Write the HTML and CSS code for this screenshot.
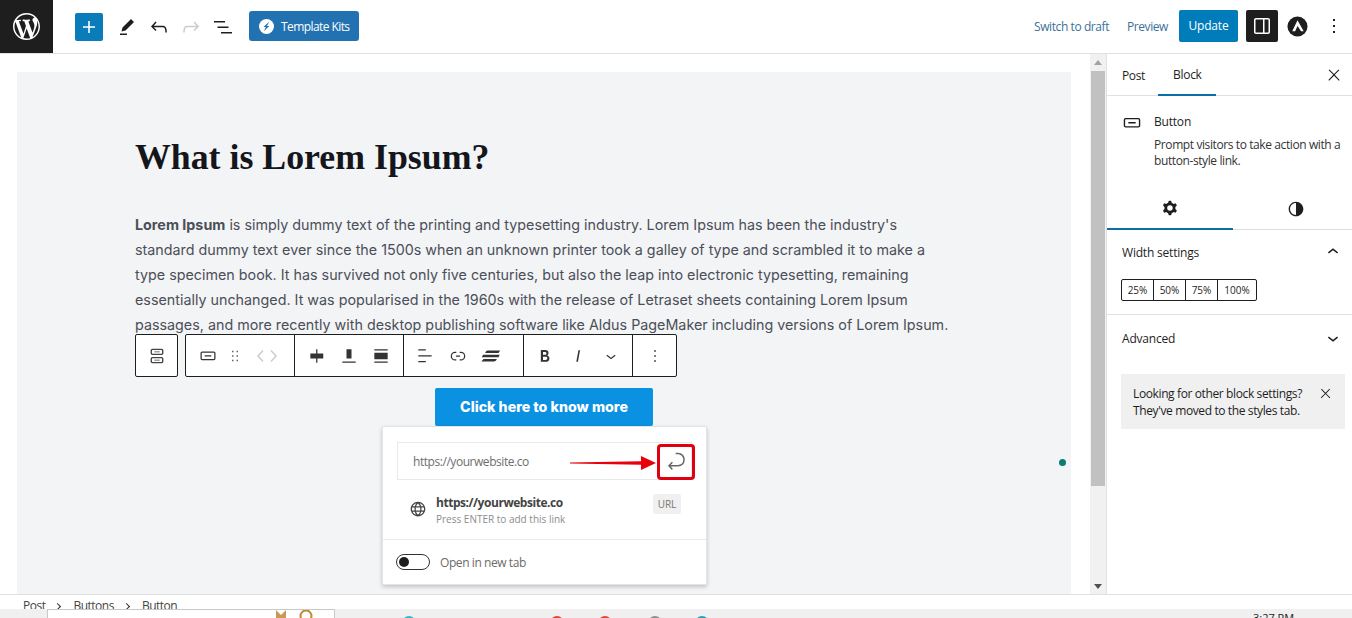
FILE: index.html
```html
<!DOCTYPE html>
<html lang="en">
<head>
<meta charset="UTF-8">
<title>Edit Post</title>
<link rel="stylesheet" href="styles.css">
</head>
<body>
<div class="topbar">
    <div class="wp-logo">
        <svg viewBox="0 0 20 20" width="36" height="36"><path fill="#fff" d="M20 10c0-5.51-4.49-10-10-10C4.48 0 0 4.49 0 10c0 5.52 4.48 10 10 10 5.51 0 10-4.48 10-10zM7.78 15.37L4.37 6.22c.55-.02 1.17-.08 1.17-.08.5-.06.44-1.13-.06-1.11 0 0-1.45.11-2.37.11-.18 0-.37 0-.58-.01C4.12 2.69 6.87 1.11 10 1.11c2.33 0 4.45.87 6.05 2.34-.68-.11-1.65.39-1.65 1.58 0 .74.45 1.36.9 2.1.35.61.55 1.36.55 2.46 0 1.49-1.4 5-1.4 5l-3.03-8.37c.54-.02.82-.17.82-.17.5-.05.44-1.25-.06-1.22 0 0-1.44.12-2.38.12-.87 0-2.33-.12-2.33-.12-.5-.03-.56 1.2-.06 1.22l.92.08 1.26 3.41zM17.41 10c.24-.64.74-1.87.43-4.25.7 1.29 1.05 2.71 1.05 4.25 0 3.29-1.73 6.24-4.4 7.78.97-2.59 1.94-5.2 2.92-7.78zM6.1 18.09C3.12 16.65 1.11 13.53 1.11 10c0-1.3.23-2.48.72-3.59C3.25 10.3 4.67 14.2 6.1 18.09zm4.03-6.63l2.58 6.98c-.86.29-1.76.45-2.71.45-.79 0-1.57-.11-2.29-.33.81-2.38 1.62-4.74 2.42-7.1z"/></svg>
    </div>
    <div class="tools">
        <div class="add-btn"><svg viewBox="0 0 24 24" width="24" height="24"><path fill="#fff" d="M18 11.2h-5.2V6h-1.6v5.2H6v1.6h5.2V18h1.6v-5.2H18z"/></svg></div>
        <div class="tool"><svg viewBox="0 0 24 24" width="24" height="24"><path d="m19 7-3-3-8.5 8.5-1 4 4-1L19 7Zm-7 11.5H5V20h7v-1.5Z"/></svg></div>
        <div class="tool"><svg viewBox="0 0 24 24" width="24" height="24"><path d="M18.3 11.7c-.6-.6-1.4-.9-2.3-.9H6.7l2.9-3.3-1.1-1-4.5 5L8.5 16l1-1-2.7-2.7H16c.5 0 .9.2 1.3.5 1 1 1 3.4 1 4.5v.3h1.5v-.2c0-1.5 0-4.3-1.5-5.7z"/></svg></div>
        <div class="tool off"><svg viewBox="0 0 24 24" width="24" height="24"><path d="M15.6 6.5l-1.1 1 2.9 3.3H8c-.9 0-1.7.3-2.3.9-1.4 1.5-1.4 4.2-1.4 5.6v.2h1.5v-.3c0-1.1 0-3.5 1-4.5.3-.3.7-.5 1.3-.5h9.2L14.5 15l1.1 1.1 4.6-4.6-4.6-5z"/></svg></div>
        <div class="tool"><svg viewBox="0 0 24 24" width="24" height="24"><path d="M3 6h11v1.5H3V6Zm3.5 5.5h11V13h-11v-1.5ZM21 17H10v1.5h11V17Z"/></svg></div>
        <div class="kits">
            <svg viewBox="0 0 20 20" width="15" height="15"><circle cx="10" cy="10" r="10" fill="#fff"/><path fill="#2271b1" d="M13.6 3.6 6 10.6h3.2l-2.8 5.8 7.4-7h-3.2z"/></svg>
            <span>Template Kits</span>
        </div>
    </div>
    <div class="actions">
        <a class="link draft">Switch to draft</a>
        <a class="link preview">Preview</a>
        <div class="update">Update</div>
        <div class="panel-btn"><svg viewBox="0 0 24 24" width="24" height="24"><path fill="#fff" d="M18 4H6c-1.1 0-2 .9-2 2v12c0 1.1.9 2 2 2h12c1.1 0 2-.9 2-2V6c0-1.1-.9-2-2-2zM6 5.5h7v13H6c-.3 0-.5-.2-.5-.5V6c0-.3.2-.5.5-.5zm12.5 12.5c0 .3-.2.5-.5.5h-3.5v-13H18c.3 0 .5.2.5.5v12z"/></svg></div>
        <div class="astra"><svg viewBox="0 0 22 22" width="21" height="21"><circle cx="11" cy="11" r="10.5" fill="#1e1e1e"/><path fill="#fff" d="M11 4.500 5.500 16h3l2.600-5.500 3.600 5.500h2.800z"/></svg></div>
        <div class="more"><svg viewBox="0 0 24 24" width="24" height="24"><path d="M13 19h-2v-2h2v2zm0-6h-2v-2h2v2zm0-6h-2V5h2v2z"/></svg></div>
    </div>
</div>

<div class="main">
    <div class="canvas">
        <div class="editor">
            <h1 class="title">What is Lorem Ipsum?</h1>
            <p class="para"><b>Lorem Ipsum</b> is simply dummy text of the printing and typesetting industry. Lorem Ipsum has been the industry's<br>standard dummy text ever since the 1500s when an unknown printer took a galley of type and scrambled it to make a<br>type specimen book. It has survived not only five centuries, but also the leap into electronic typesetting, remaining<br>essentially unchanged. It was popularised in the 1960s with the release of Letraset sheets containing Lorem Ipsum<br>passages, and more recently with desktop publishing software like Aldus PageMaker including versions of Lorem Ipsum.</p>

            <div class="block-toolbar">
                <div class="tb-group tb-parent">
                    <svg viewBox="0 0 24 24" width="24" height="24"><path d="M7 4h10a2 2 0 0 1 2 2v3a2 2 0 0 1-2 2H7a2 2 0 0 1-2-2V6a2 2 0 0 1 2-2Zm0 1.5a.5.5 0 0 0-.5.5v3a.5.5 0 0 0 .5.5h10a.5.5 0 0 0 .5-.5V6a.5.5 0 0 0-.5-.5H7ZM7 13h10a2 2 0 0 1 2 2v3a2 2 0 0 1-2 2H7a2 2 0 0 1-2-2v-3a2 2 0 0 1 2-2Zm0 1.5a.5.5 0 0 0-.5.5v3a.5.5 0 0 0 .5.5h10a.5.5 0 0 0 .5-.5v-3a.5.5 0 0 0-.5-.5H7ZM9 7h6v1H9V7Zm0 9h6v1H9v-1Z"/></svg>
                </div>
                <div class="tb-main">
                    <div class="tb-section s1">
                        <svg viewBox="0 0 24 24" width="24" height="24"><path d="M8 12.5h8V11H8v1.5Z M19 6.5H5a2 2 0 0 0-2 2V15a2 2 0 0 0 2 2h14a2 2 0 0 0 2-2V8.5a2 2 0 0 0-2-2ZM5 8h14a.5.5 0 0 1 .5.5V15a.5.5 0 0 1-.5.5H5a.5.5 0 0 1-.5-.5V8.5A.5.5 0 0 1 5 8Z"/></svg>
                        <svg class="drag" viewBox="0 0 24 24" width="18" height="18"><path d="M8 7h2V5H8v2zm0 6h2v-2H8v2zm0 6h2v-2H8v2zm6-14v2h2V5h-2zm0 8h2v-2h-2v2zm0 6h2v-2h-2v2z"/></svg>
                        <svg class="movers" viewBox="0 0 24 14" width="24" height="14"><path d="M8 1.5 3 7l5 5.5M16 1.5 21 7l-5 5.5" fill="none" stroke="#ccc" stroke-width="1.5"/></svg>
                    </div>
                    <div class="tb-section s2">
                        <svg viewBox="0 0 24 24" width="24" height="24"><path d="M12.5 15v5H11v-5H4V9h7V4h1.5v5h7v6h-7Z"/></svg>
                        <svg viewBox="0 0 24 24" width="24" height="24"><path d="M15 4H9v11h6V4zM4 18.5V20h16v-1.5H4z"/></svg>
                        <svg viewBox="0 0 24 24" width="24" height="24"><path d="M4 4h16v1.5H4zM4 18.5h16V20H4zM4 8h16v8H4z"/></svg>
                    </div>
                    <div class="tb-section s3">
                        <svg viewBox="0 0 24 24" width="24" height="24"><path d="M13 5.500H4V4h9v1.500Zm7 7H4V11h16v1.500Zm-7 7H4V18h9v1.500Z"/></svg>
                        <svg viewBox="0 0 24 24" width="24" height="24"><path d="M10 17.389H8.444A5.194 5.194 0 1 1 8.444 7H10v1.500H8.444a3.694 3.694 0 0 0 0 7.389H10v1.500ZM14 7h1.556a5.194 5.194 0 0 1 0 10.390H14v-1.500h1.556a3.694 3.694 0 0 0 0-7.390H14V7Zm-4.500 6h5v-1.500h-5V13Z"/></svg>
                        <svg viewBox="0 0 24 24" width="24" height="24"><path d="M8 5.500h15L21 8.500H5C5.500 6.800 6.500 5.500 8 5.500ZM2.500 10.500h20L21 13.500H1ZM3 15.500h16c-.5 1.800-1.800 3-3.500 3H.5Z"/></svg>
                    </div>
                    <div class="tb-section s4">
                        <svg viewBox="0 0 24 24" width="24" height="24"><path d="M14.700 11.300c1-.6 1.500-1.600 1.500-3 0-2.300-1.300-3.400-4-3.400H7v14h5.800c1.400 0 2.500-.3 3.300-1 .8-.7 1.200-1.700 1.200-2.900.1-1.900-.8-3.100-2.600-3.700zm-5.100-4h2.300c.6 0 1.100.1 1.400.4.3.3.5.7.5 1.200s-.2 1-.5 1.200c-.3.3-.8.4-1.400.4H9.600V7.300zm4.600 9c-.4.3-1 .4-1.700.4H9.600v-3.900h2.900c.7 0 1.300.2 1.700.5.4.3.6.8.6 1.500s-.2 1.200-.6 1.500z"/></svg>
                        <svg viewBox="0 0 24 24" width="24" height="24"><path d="M12.500 5L10 19h1.900l2.500-14z"/></svg>
                        <svg viewBox="0 0 24 24" width="24" height="24"><path d="M17.500 11.600L12 16l-5.500-4.400.9-1.200L12 14l4.500-3.600 1 1.200z"/></svg>
                    </div>
                    <div class="tb-section s5">
                        <svg viewBox="0 0 24 24" width="24" height="24"><path d="M13 19h-2v-2h2v2zm0-6h-2v-2h2v2zm0-6h-2V5h2v2z"/></svg>
                    </div>
                </div>
            </div>

            <div class="button-row">
                <div class="button-wrap">
                    <div class="cta">Click here to know more</div>
                    <div class="link-popover">
                        <div class="url-row">
                            <span class="url-input">https://yourwebsite.co</span>
                            <svg class="submit-icon" viewBox="0 0 24 24" width="24" height="24"><path d="M6.734 16.106l2.176-2.380-1.093-1.028-3.846 4.158 3.846 4.157 1.093-1.027-2.176-2.380h2.811c1.125 0 2.250.030 3.374 0 1.428-.001 3.362-.250 4.963-1.277 1.660-1.065 2.868-2.906 2.868-5.859 0-2.479-1.327-4.896-3.650-5.930-1.820-.813-3.044-.800-4.806-.788l-.567.002v1.500c.184 0 .368 0 .553-.002 1.820-.007 2.704-.014 4.210.657 1.854.827 2.760 2.657 2.760 4.561 0 2.472-.973 3.824-2.178 4.596-1.258.807-2.864 1.040-4.163 1.040h-.020c-1.115.030-2.229 0-3.344 0H6.734z"/></svg>
                            <div class="red-box"></div>
                            <svg class="red-arrow" viewBox="0 0 86 14" width="86" height="14"><path fill="#e8000b" d="M0 6.600 71 5.200V0l15 7-15 7V8.800L0 7.400z"/></svg>
                        </div>
                        <div class="suggestion">
                            <svg viewBox="0 0 24 24" width="20" height="20"><path d="M12 3.300c-4.800 0-8.800 3.900-8.800 8.800 0 4.800 3.900 8.800 8.800 8.800 4.800 0 8.800-3.900 8.800-8.800s-4-8.800-8.800-8.800zm6.500 5.500h-2.600C15.400 7.300 14.800 6 14 5c2 .6 3.600 2 4.500 3.800zm.7 3.200c0 .6-.1 1.200-.2 1.800h-2.900c.1-.6.1-1.200.1-1.800s-.1-1.200-.1-1.800H19c.2.6.2 1.200.2 1.800zM12 18.700c-1-.7-1.800-1.900-2.300-3.500h4.600c-.5 1.600-1.300 2.900-2.300 3.500zm-2.600-4.900c-.1-.6-.1-1.100-.1-1.800 0-.6.1-1.200.1-1.800h5.200c.1.600.1 1.100.1 1.800s-.1 1.200-.1 1.800H9.400zM4.800 12c0-.6.1-1.200.2-1.800h2.900c-.1.600-.1 1.200-.1 1.800 0 .6.1 1.200.1 1.800H5c-.2-.6-.2-1.200-.2-1.800zM12 5.300c1 .7 1.800 1.900 2.300 3.500H9.700c.5-1.600 1.300-2.900 2.300-3.500zM10 5c-.8 1-1.400 2.300-1.800 3.800H5.500C6.400 7 8 5.600 10 5zM5.500 15.300h2.600c.4 1.500 1 2.800 1.800 3.700-1.900-.6-3.500-2-4.400-3.700zM14 19c.8-1 1.400-2.200 1.800-3.700h2.600C17.600 17 16 18.400 14 19z"/></svg>
                            <div class="sug-text">
                                <strong>https://yourwebsite.co</strong>
                                <span>Press ENTER to add this link</span>
                            </div>
                            <span class="url-tag">URL</span>
                        </div>
                        <div class="new-tab">
                            <span class="toggle"><i></i></span>
                            <span>Open in new tab</span>
                        </div>
                    </div>
                </div>
            </div>
            <span class="dot"></span>
        </div>
    </div>
    <div class="scrollbar">
        <span class="arrow up"></span>
        <div class="thumb"></div>
        <span class="arrow down"></span>
    </div>
    <div class="sidebar">
        <div class="side-tabs">
            <span class="side-tab">Post</span>
            <span class="side-tab active">Block</span>
            <svg class="side-close" viewBox="0 0 24 24" width="20" height="20"><path d="M13 11.800l6.100-6.300-1-1-6.100 6.200-6.100-6.200-1 1 6.100 6.300-6.500 6.700 1 1 6.500-6.600 6.500 6.600 1-1z"/></svg>
        </div>
        <div class="block-card">
            <svg viewBox="0 0 24 24" width="22" height="22"><path d="M8 12.500h8V11H8v1.500Z M19 6.500H5a2 2 0 0 0-2 2V15a2 2 0 0 0 2 2h14a2 2 0 0 0 2-2V8.500a2 2 0 0 0-2-2ZM5 8h14a.5.5 0 0 1 .5.5V15a.5.5 0 0 1-.5.5H5a.5.5 0 0 1-.5-.5V8.500A.5.5 0 0 1 5 8Z"/></svg>
            <div class="card-text">
                <div class="card-title">Button</div>
                <div class="card-desc">Prompt visitors to take action with a button-style link.</div>
            </div>
        </div>
        <div class="style-tabs">
            <div class="style-tab active"><svg fill-rule="evenodd" viewBox="0 0 24 24" width="22" height="22"><path d="M10.289 4.836A1 1 0 0 1 11.275 4h1.306a1 1 0 0 1 .987.836l.244 1.466c.787.260 1.503.679 2.108 1.218l1.393-.522a1 1 0 0 1 1.216.437l.653 1.130a1 1 0 0 1-.230 1.273l-1.148.944a6.025 6.025 0 0 1 0 2.435l1.149.946a1 1 0 0 1 .230 1.272l-.653 1.130a1 1 0 0 1-1.216.437l-1.394-.522c-.605.540-1.320.958-2.108 1.218l-.244 1.466a1 1 0 0 1-.987.836h-1.306a1 1 0 0 1-.986-.836l-.244-1.466a5.995 5.995 0 0 1-2.108-1.218l-1.394.522a1 1 0 0 1-1.217-.436l-.653-1.131a1 1 0 0 1 .230-1.272l1.149-.946a6.026 6.026 0 0 1 0-2.435l-1.148-.944a1 1 0 0 1-.230-1.272l.653-1.131a1 1 0 0 1 1.217-.437l1.393.522a5.994 5.994 0 0 1 2.108-1.218l.244-1.466ZM14.929 12a3 3 0 1 1-6 0 3 3 0 0 1 6 0Z"/></svg></div>
            <div class="style-tab"><svg viewBox="0 0 24 24" width="22" height="22"><path d="M12 4c-4.400 0-8 3.600-8 8s3.600 8 8 8 8-3.600 8-8-3.600-8-8-8zm0 14.500c-3.600 0-6.500-2.900-6.500-6.500S8.400 5.500 12 5.500v13z"/></svg></div>
        </div>
        <div class="panel width-panel">
            <div class="panel-head">
                <span>Width settings</span>
                <svg viewBox="0 0 24 24" width="22" height="22"><path d="M6.500 12.400L12 8l5.500 4.400-.9 1.200L12 10l-4.500 3.600-1-1.200z"/></svg>
            </div>
            <div class="width-btns">
                <span>25%</span><span>50%</span><span>75%</span><span class="wide">100%</span>
            </div>
        </div>
        <div class="panel adv-panel">
            <div class="panel-head">
                <span>Advanced</span>
                <svg viewBox="0 0 24 24" width="22" height="22"><path d="M17.500 11.600L12 16l-5.500-4.400.9-1.200L12 14l4.500-3.600 1 1.200z"/></svg>
            </div>
        </div>
        <div class="notice">
            <span>Looking for other block settings? They've moved to the styles tab.</span>
            <svg viewBox="0 0 24 24" width="15" height="15"><path d="M13 11.800l6.100-6.300-1-1-6.100 6.200-6.100-6.200-1 1 6.100 6.300-6.500 6.700 1 1 6.500-6.600 6.500 6.600 1-1z"/></svg>
        </div>
    </div>
</div>

<div class="crumbs">
    <span>Post</span><i class="sep"></i><span>Buttons</span><i class="sep"></i><span>Button</span>
</div>

<div class="taskbar">
    <div class="task-window">
        <svg viewBox="0 0 44 9" width="44" height="9"><path d="M2 0l5 5 5-5v9H2z" fill="#c79a56"/><circle cx="32" cy="6" r="5.500" fill="none" stroke="#c08a2e" stroke-width="2"/></svg>
    </div>
    <i class="task-dot d1"></i>
    <i class="task-dot d2"></i>
    <i class="task-dot d3"></i>
    <i class="task-dot d4"></i>
    <i class="task-dot d5"></i>
    <span class="clock">3:27 PM</span>
</div>
</body>
</html>
```

FILE: styles.css
```css
*{margin: 0; padding: 0; box-sizing: border-box;}
html, body{
    width: 1352px;
    height: 618px;
    overflow: hidden;
}
body{
    display: flex;
    flex-direction: column;
    font-family: "Open Sans", "Noto Sans", sans-serif;
    font-size: 12px;
    color: #1e1e1e;
    background: #fff;
}
svg{
    display: block;
    fill: #1e1e1e;
    flex: none;
}

/* top bar */
.topbar{
    height: 54px;
    flex: none;
    display: flex;
    align-items: flex-start;
    border-bottom: 1px solid #e0e0e0;
}
.wp-logo{
    width: 53px;
    height: 53px;
    background: #1e1e1e;
    display: flex;
    align-items: center;
    justify-content: center;
}
.wp-logo svg{
    width: 27px;
    height: 27px;
}
.tools{
    display: flex;
    align-items: center;
    height: 53px;
    padding-left: 22px;
}
.add-btn{
    width: 28px;
    height: 28px;
    background: #0a7cba;
    border-radius: 2px;
    display: flex;
    align-items: center;
    justify-content: center;
    margin-right: 8px;
}
.tool{
    width: 32px;
    display: flex;
    justify-content: center;
}
.tool.off svg{
    fill: #ccc;
}
.kits{
    width: 110px;
    height: 30px;
    margin-left: 10px;
    margin-top: -1px;
    background: #2271b1;
    border-radius: 3px;
    color: #fff;
    display: flex;
    align-items: center;
    gap: 7px;
    padding-left: 10px;
    font-size: 12px;
    letter-spacing: -0.58px;
}
.actions{
    margin-left: auto;
    height: 52px;
    display: flex;
    align-items: center;
}
.link{
    color: #3b7199;
    letter-spacing: -0.42px;
    white-space: nowrap;
}
.preview{
    margin-left: 18px;
}
.update{
    margin-left: 11px;
    width: 59px;
    height: 32px;
    background: #007cba;
    border-radius: 2px;
    color: #fff;
    line-height: 32px;
    text-align: center;
    letter-spacing: -0.2px;
}
.panel-btn{
    margin-left: 8px;
    width: 32px;
    height: 32px;
    background: #1e1e1e;
    border-radius: 2px;
    display: flex;
    align-items: center;
    justify-content: center;
}
.astra{
    margin-left: 9px;
}
.more{
    margin-left: 14px;
    margin-right: 6px;
}

/* main row */
.main{
    height: 540px;
    flex: none;
    display: flex;
}
.canvas{
    width: 1090px;
    flex: none;
    padding: 18px 19px 0 17px;
}
.editor{
    position: relative;
    height: 522px;
    background: #f3f4f6;
    padding: 63px 0 0 118px;
}
.title{
    font-family: "Liberation Serif", serif;
    font-size: 35.8px;
    line-height: 44px;
    font-weight: 700;
    color: #14161c;
}
.para{
    margin-top: 32.5px;
    font-family: Inter, sans-serif;
    font-size: 14.32px;
    line-height: 25.2px;
    color: #4b4f58;
    white-space: nowrap;
}
.para b{
    font-weight: 700;
}
.button-row{
    display: flex;
    justify-content: center;
    margin-left: -118px;
    margin-top: 50.5px;
}
.button-wrap{
    position: relative;
}
.cta{
    width: 218px;
    height: 38px;
    background: #0a91e2;
    border-radius: 2px;
    color: #fff;
    font-family: Inter, sans-serif;
    font-weight: 800;
    font-size: 14.2px;
    line-height: 38px;
    text-align: center;
}

/* block toolbar sits over the text */
.block-toolbar{
    position: absolute;
    left: 118px;
    top: 262px;
    display: flex;
    gap: 7px;
    height: 43px;
}
.tb-group, .tb-main{
    background: #fff;
    border: 1px solid #1e1e1e;
    border-radius: 2px;
    height: 43px;
}
.tb-parent{
    width: 43px;
    display: flex;
    align-items: center;
    justify-content: center;
}
.tb-parent svg{
    width: 22px;
    height: 22px;
    fill: #444;
}
.tb-main{
    display: flex;
    width: 492px;
}
.tb-section{
    display: flex;
    align-items: center;
    border-right: 1px solid #1e1e1e;
    height: 41px;
}
.tb-section svg{
    width: 20px;
    height: 20px;
    fill: #333;
}
.tb-section:last-child{
    border-right: 0;
}
.s1{
    width: 109px;
    padding-left: 12px;
    gap: 8px;
}
.tb-section .drag{
    width: 18px;
    height: 18px;
    fill: #666;
}
.tb-section .movers{
    width: 24px;
    height: 14px;
    margin-left: 3px;
}
.s2{
    width: 109px;
    padding-left: 12px;
    gap: 12px;
}
.s3{
    width: 120px;
    padding-left: 11px;
    gap: 13px;
}
.s4{
    width: 109px;
    padding-left: 11px;
    gap: 13px;
}
.s5{
    flex: 1;
    padding-left: 12px;
}

/* link popover */
.link-popover{
    position: absolute;
    left: -53px;
    top: 38px;
    width: 325px;
    height: 159px;
    background: #fff;
    border: 1px solid #e4e4e4;
    border-radius: 2px;
    box-shadow: 0 2px 4px rgba(0,0,0,.2);
    color: #6b6b6b;
    z-index: 2;
}
.url-row{
    position: relative;
    margin: 15px 14px 0;
    height: 38px;
    border: 1px solid #e9e9e9;
    display: flex;
    align-items: center;
}
.url-input{
    padding-left: 15px;
    letter-spacing: -0.45px;
    color: #6e6e6e;
}
.submit-icon{
    position: absolute;
    right: 3px;
    top: 6px;
    fill: #666;
}
.red-box{
    position: absolute;
    right: -4px;
    top: 1px;
    width: 38px;
    height: 36px;
    border: 3px solid #e0000f;
    border-radius: 4px;
}
.red-arrow{
    position: absolute;
    left: 172px;
    top: 13px;
}
.suggestion{
    display: flex;
    align-items: flex-start;
    padding: 15px 25px 0 25px;
    height: 60px;
    border-bottom: 1px solid #ebebeb;
}
.suggestion svg{
    margin-top: 4px;
    fill: #444;
}
.sug-text{
    margin-left: 8px;
    display: flex;
    flex-direction: column;
}
.sug-text strong{
    font-size: 12px;
    line-height: 16px;
    color: #444;
    letter-spacing: -0.45px;
}
.sug-text span{
    font-size: 10px;
    line-height: 16px;
    color: #8c8c8c;
}
.url-tag{
    margin-left: auto;
    margin-top: -1px;
    width: 28px;
    height: 20px;
    background: #f0f0f0;
    border-radius: 2px;
    font-size: 10px;
    line-height: 20px;
    text-align: center;
    color: #757575;
}
.new-tab{
    display: flex;
    align-items: center;
    gap: 10px;
    height: 44px;
    padding-left: 13px;
    letter-spacing: -0.42px;
}
.toggle{
    width: 34px;
    height: 16px;
    border: 1px solid #333;
    border-radius: 8px;
    padding: 2px;
    display: block;
}
.toggle i{
    display: block;
    width: 10px;
    height: 10px;
    border-radius: 50%;
    background: #1e1e1e;
}
.dot{
    position: absolute;
    left: 1042px;
    top: 387px;
    width: 7px;
    height: 7px;
    border-radius: 50%;
    background: #0a7d72;
}

/* scrollbar */
.scrollbar{
    width: 16px;
    flex: none;
    background: #f1f1f1;
    position: relative;
    padding: 17px 1px 0 1px;
}
.thumb{
    height: 415px;
    background: #c1c1c1;
}
.arrow{
    position: absolute;
    left: 4px;
    width: 0;
    height: 0;
    border-left: 4px solid transparent;
    border-right: 4px solid transparent;
}
.arrow.up{
    top: 6px;
    border-bottom: 5px solid #a3a3a3;
}
.arrow.down{
    bottom: 5px;
    border-top: 5px solid #505050;
}

/* sidebar */
.sidebar{
    width: 246px;
    flex: none;
    border-left: 1px solid #e0e0e0;
    font-size: 12px;
    overflow: hidden;
}
.side-tabs{
    height: 42px;
    display: flex;
    align-items: center;
    border-bottom: 1px solid #e0e0e0;
    position: relative;
    padding-left: 15px;
}
.side-tab{
    display: flex;
    align-items: center;
    height: 42px;
    padding-top: 2px;
    letter-spacing: -0.35px;
}
.side-tab.active{
    margin-left: 13px;
    padding: 2px 14px 0 15px;
    border-bottom: 2px solid #0a6fa4;
    letter-spacing: -0.3px;
}
.side-close{
    margin-left: auto;
    margin-right: 9px;
    width: 18px;
    height: 18px;
}
.block-card{
    height: 94px;
    padding: 16px 0 0 14px;
    display: flex;
    gap: 11px;
}
.card-text{
    width: 198px;
}
.card-title{
    line-height: 18px;
    font-weight: 500;
    letter-spacing: -0.2px;
    margin-top: 1px;
}
.card-desc{
    margin-top: 6px;
    line-height: 16px;
    letter-spacing: -0.4px;
    color: #333;
}
.style-tabs{
    display: flex;
    height: 40px;
    border-bottom: 1px solid #ddd;
}
.style-tab{
    width: 126px;
    flex: none;
    display: flex;
    justify-content: center;
    align-items: center;
    padding-bottom: 2px;
    height: 40px;
}
.style-tab.active{
    border-bottom: 2px solid #0a6fa4;
}
.panel{
    border-bottom: 1px solid #e0e0e0;
    padding: 0 15px;
}
.width-panel{
    height: 85px;
}
.adv-panel{
    border-bottom: 0;
    height: 59px;
}
.panel-head{
    display: flex;
    justify-content: space-between;
    align-items: center;
    height: 46px;
    letter-spacing: -0.2px;
    padding-right: 1px;
}
.width-panel .panel-head{
    height: 44px;
}
.panel-head svg{
    margin-right: -8px;
}
.width-btns{
    display: flex;
    width: 136px;
    height: 22px;
    border: 1px solid #1e1e1e;
    border-radius: 2px;
    margin-top: 5px;
    margin-left: -1px;
}
.width-btns span{
    width: 32px;
    font-size: 10px;
    line-height: 20px;
    text-align: center;
    border-right: 1px solid #1e1e1e;
}
.width-btns span.wide{
    flex: 1;
    border-right: 0;
}
.notice{
    margin: 0 7px 0 14px;
    height: 55px;
    background: #f0f0f0;
    padding: 11px 11px 0 12px;
    display: flex;
    line-height: 17px;
    letter-spacing: -0.38px;
}
.notice span{
    width: 176px;
}
.notice svg{
    margin-left: 9px;
    margin-top: 1px;
}

/* breadcrumb, cut off by the taskbar */
.crumbs{
    height: 15px;
    flex: none;
    border-top: 1px solid #e0e0e0;
    overflow: hidden;
    display: flex;
    align-items: flex-start;
    padding: 3px 0 0 23px;
    line-height: 16px;
    letter-spacing: -0.5px;
    color: #444;
}
.sep{
    width: 5px;
    height: 5px;
    border-top: 1.5px solid #333;
    border-right: 1.5px solid #333;
    transform: rotate(45deg);
    margin: 6px 13px 0 10px;
}

/* windows taskbar, mostly off screen */
.taskbar{
    flex: 1;
    background: #f0f0f0;
    position: relative;
    overflow: hidden;
}
.task-window{
    position: absolute;
    left: 47px;
    top: 0;
    width: 288px;
    height: 12px;
    background: #fff;
    border: 1px solid #c8c8c8;
    padding-left: 226px;
}
.task-dot{
    position: absolute;
    top: 7px;
    width: 14px;
    height: 14px;
    border-radius: 50%;
}
.d1{left: 402px; background: #38b6c9;}
.d2{left: 550px; background: #d8493a;}
.d3{left: 598px; background: #d8493a;}
.d4{left: 648px; background: #8f8f8f;}
.d5{left: 695px; background: #2a9fb5;}
.clock{
    position: absolute;
    left: 1253px;
    top: 2px;
    font-size: 11px;
    line-height: 14px;
    color: #222;
}
```
